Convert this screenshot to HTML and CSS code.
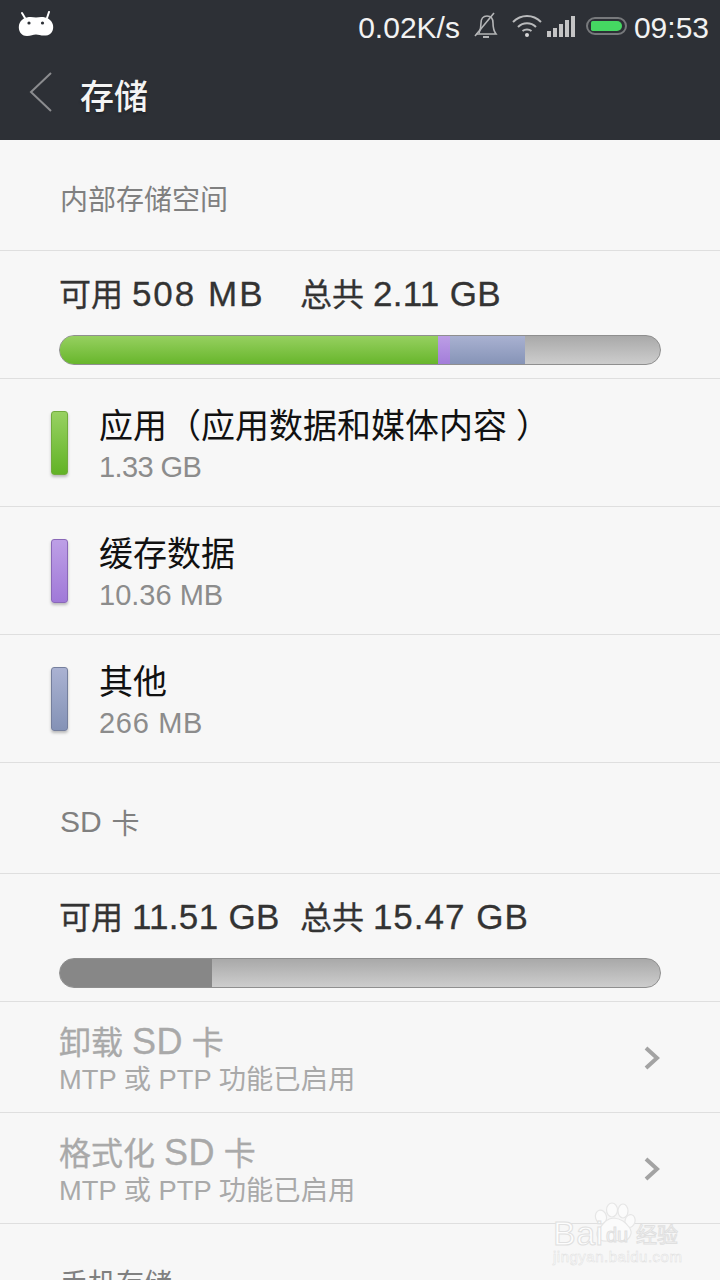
FILE: index.html
```html
<!DOCTYPE html>
<html lang="zh-CN">

<head>
  <meta charset="UTF-8">
  <meta name="viewport" content="width=device-width, initial-scale=1.0">
  <title>存储</title>
  <link rel="stylesheet" href="styles.css">
</head>

<body>
  <div class="screen">
    <div class="status-bar">
      <svg class="logo" width="36" height="26" viewBox="0 0 36 26">
        <path d="M4 2 L7 7 M31 1 L29 7" stroke="#fff" stroke-width="2" stroke-linecap="round" />
        <path d="M18 6.500 C11 5 3 6 1 14 C0 20 3 25 9 25 C13 25 15 23.500 18 23.500 C21 23.500 23 25 28 24.500 C33 24 36 20 35 14 C33 6 25 5 18 6.500 Z" fill="#fff" />
        <circle cx="11" cy="12" r="1.600" fill="#2d3036" />
        <circle cx="24.500" cy="12" r="1.600" fill="#2d3036" />
      </svg>
      <div class="status-right">
        <span class="speed">0.02K/s</span>
        <svg class="bell" width="26" height="28" viewBox="0 0 26 28" fill="none" stroke="#b4b5b7" stroke-width="1.600">
          <path d="M6 21 C8 17 8 15 8 11 C8 7 10 4 14 4 C18 4 20 7 20 11 C20 15 20 18 23 22 L3 22" />
          <path d="M2 24 L21 1" />
          <path d="M10 25 H16" stroke-width="2" />
        </svg>
        <svg class="wifi" width="30" height="24" viewBox="0 0 30 24" fill="none" stroke="#b9babc" stroke-width="2">
          <path d="M1 8 C9 0 21 0 29 8" />
          <path d="M6 13 C11 8 19 8 24 13" />
          <path d="M10.500 17 C13 15 17 15 19.500 17" />
          <circle cx="15" cy="21" r="2" fill="#d6d6d7" stroke="none" />
        </svg>
        <div class="signal">
          <i class="sig1"></i><i class="sig2"></i><i class="sig3"></i><i class="sig4"></i><i class="sig5"></i>
        </div>
        <div class="battery"><div class="battery-fill"></div></div>
        <span class="clock">09:53</span>
      </div>
    </div>

    <div class="title-bar">
      <svg class="back" width="24" height="40" viewBox="0 0 24 40" fill="none" stroke="#8b8c8f" stroke-width="2">
        <path d="M22 1 L2 20 L22 39" />
      </svg>
      <h1 class="title">存储</h1>
    </div>

    <div class="section-head">内部存储空间</div>

    <div class="summary">
      <div class="summary-text">
        <span class="avail">可用 <span class="num num-widest">508 MB</span></span>
        <span>总共 <span class="num">2.11 GB</span></span>
      </div>
      <div class="bar">
        <div class="seg seg-green"></div>
        <div class="seg seg-purple"></div>
        <div class="seg seg-blue"></div>
      </div>
    </div>

    <div class="usage-row">
      <div class="chip chip-green"></div>
      <div>
        <div class="usage-name">应用（应用数据和媒体内容<span class="paren-close">）</span></div>
        <div class="usage-size size-tight">1.33 GB</div>
      </div>
    </div>
    <div class="usage-row">
      <div class="chip chip-purple"></div>
      <div>
        <div class="usage-name">缓存数据</div>
        <div class="usage-size">10.36 MB</div>
      </div>
    </div>
    <div class="usage-row">
      <div class="chip chip-blue"></div>
      <div>
        <div class="usage-name">其他</div>
        <div class="usage-size size-wide">266 MB</div>
      </div>
    </div>

    <div class="section-head section-sd"><span class="sd-latin">SD</span> 卡</div>

    <div class="summary">
      <div class="summary-text">
        <span class="avail">可用 <span class="num">11.51 GB</span></span>
        <span>总共 <span class="num num-wide">15.47 GB</span></span>
      </div>
      <div class="bar">
        <div class="seg seg-used"></div>
      </div>
    </div>

    <div class="action-row">
      <div>
        <div class="action-name">卸载 <span class="num-sd">SD</span> 卡</div>
        <div class="action-sub">MTP 或 PTP 功能已启用</div>
      </div>
      <svg class="chevron" width="16" height="24" viewBox="0 0 16 24" fill="none" stroke="#a3a3a3" stroke-width="4">
        <path d="M2 2 L13 12 L2 22" />
      </svg>
    </div>
    <div class="action-row">
      <div>
        <div class="action-name">格式化 <span class="num-sd">SD</span> 卡</div>
        <div class="action-sub">MTP 或 PTP 功能已启用</div>
      </div>
      <svg class="chevron" width="16" height="24" viewBox="0 0 16 24" fill="none" stroke="#a3a3a3" stroke-width="4">
        <path d="M2 2 L13 12 L2 22" />
      </svg>
    </div>

    <div class="section-head">手机存储</div>

    <div class="watermark">
      <svg class="paw" width="50" height="50" viewBox="0 0 50 50" fill="#fbfbfb" stroke="#e6e6e6" stroke-width="1.200">
        <ellipse cx="11" cy="15" rx="5.500" ry="7" transform="rotate(-15 11 15)" />
        <ellipse cx="22" cy="8" rx="5.500" ry="7" />
        <ellipse cx="33" cy="9" rx="5" ry="7" />
        <ellipse cx="40" cy="19" rx="5" ry="6.500" transform="rotate(15 40 19)" />
        <path d="M24 16 C32 17 35 20 39 25 C44 31 39 40 31 39 C26 38 22 38 17 39 C9 40 4 33 9 27 C13 22 16 16 24 16 Z" />
      </svg>
      <span class="wm-bai">Bai</span>
      <span class="wm-du">du</span>
      <span class="wm-cn">经验</span>
      <span class="wm-url">jingyan.baidu.com</span>
    </div>
  </div>
</body>

</html>
```

FILE: styles.css
```css
* {
  box-sizing: border-box;
}

html,
body {
  margin: 0;
  padding: 0;
}

body {
  font-family: "Liberation Sans", "Noto Sans CJK SC", sans-serif;
  background: #f7f7f7;
  text-spacing-trim: space-all;
}

.screen {
  position: relative;
  width: 720px;
  height: 1280px;
  overflow: hidden;
  background: #f7f7f7;
}

/* status bar */
.status-bar {
  display: flex;
  align-items: center;
  justify-content: space-between;
  height: 48px;
  padding: 0 11px 0 18px;
  background: #2d3036;
  color: #f2f2f2;
}

.status-right {
  display: flex;
  align-items: center;
  font-size: 30px;
  margin-top: 4px;
}

.speed,
.clock {
  padding-top: 4px;
}

.speed {
  margin-right: 13px;
}

.bell {
  margin-right: 13px;
}

.wifi {
  margin-right: 5px;
}

.signal {
  display: flex;
  align-items: flex-end;
  gap: 2px;
  height: 22px;
  margin-right: 11px;
}

.signal i {
  display: block;
  width: 4px;
  background: #c4c4c5;
}

.sig1 { height: 6px; }
.sig2 { height: 9px; }
.sig3 { height: 13px; }
.sig4 { height: 17px; }
.sig5 { height: 21px; }

.battery {
  width: 41px;
  height: 18px;
  padding: 2px 3px;
  border: 2px solid #77797c;
  border-radius: 9px;
  margin-right: 7px;
}

.battery-fill {
  width: 100%;
  height: 100%;
  background: #45d862;
  border-radius: 2px 6px 6px 2px;
}

/* title bar */
.title-bar {
  display: flex;
  align-items: center;
  height: 92px;
  padding-left: 29px;
  background: #2d3036;
}

.back {
  margin-top: -4px;
}

.title {
  margin: 0 0 0 27px;
  font-size: 34px;
  font-weight: 500;
  color: #f4f4f4;
  text-shadow: 0 2px 3px rgba(0, 0, 0, .3);
}

/* sections */
.section-head {
  display: flex;
  align-items: center;
  height: 111px;
  padding: 6px 0 0 60px;
  font-size: 28px;
  color: #808080;
  border-bottom: 1px solid #dfdfdf;
}

.section-sd {
  padding-top: 8px;
  white-space: pre;
}

.sd-latin {
  font-size: 30px;
  margin-right: 2px;
}

.summary {
  height: 128px;
  padding: 22px 59px 0;
  border-bottom: 1px solid #dfdfdf;
}

.summary-text {
  display: flex;
  height: 42px;
  font-size: 32px;
  line-height: 42px;
  color: #333;
  -webkit-text-stroke: .3px #333;
}

.num {
  font-size: 35px;
  letter-spacing: .3px;
}

.num-wide {
  letter-spacing: 1px;
}

.num-widest {
  letter-spacing: 2px;
}

.avail {
  width: 241px;
}

.bar {
  display: flex;
  height: 30px;
  margin-top: 20px;
  overflow: hidden;
  border: 1px solid #8f8f8f;
  border-radius: 15px;
  background: linear-gradient(#a9a9a9, #cdcdcd);
}

.seg {
  margin: -1px 0;
}

.seg-green {
  width: 378px;
  background: linear-gradient(#98d162, #66b52a);
}

.seg-purple {
  width: 12px;
  background: linear-gradient(#bd9fe6, #a27cd9);
}

.seg-blue {
  width: 75px;
  background: linear-gradient(#aab2d2, #8593b6);
}

.seg-used {
  width: 152px;
  background: #878787;
}

/* usage rows */
.usage-row {
  display: flex;
  height: 128px;
  padding: 26px 0 0 51px;
  border-bottom: 1px solid #dfdfdf;
}

.chip {
  width: 17px;
  height: 64px;
  margin: 6px 31px 0 0;
  border-radius: 3px;
  box-shadow: 0 2px 3px rgba(0, 0, 0, .25);
}

.chip-green {
  background: linear-gradient(#98d162, #62b326);
  border: 1px solid #72ab3e;
}

.chip-purple {
  background: linear-gradient(#bd9fe6, #a079d8);
  border: 1px solid #8a68b8;
}

.chip-blue {
  background: linear-gradient(#aab2d2, #8492b6);
  border: 1px solid #757f9d;
}

.usage-name {
  font-size: 34px;
  line-height: 42px;
  color: #111;
}

.paren-close {
  margin-left: 9px;
}

.usage-size {
  margin-top: 2px;
  font-size: 29px;
  line-height: 36px;
  color: #8c8c8c;
}

.size-tight {
  letter-spacing: -.6px;
}

.size-wide {
  letter-spacing: .7px;
}

/* sd card actions */
.action-row {
  display: flex;
  align-items: center;
  justify-content: space-between;
  height: 111px;
  padding: 5px 60px 0 59px;
  border-bottom: 1px solid #dfdfdf;
}

.action-name {
  height: 40px;
  font-size: 32px;
  line-height: 40px;
  color: #a9a9a9;
  -webkit-text-stroke: .3px #a9a9a9;
}

.num-sd {
  font-size: 36px;
  letter-spacing: .5px;
}

.action-sub {
  font-size: 27.300px;
  line-height: 36px;
  color: #a9a9a9;
}

.chevron {
  margin-top: -4px;
}

/* watermark */
.watermark {
  position: absolute;
  left: 552px;
  top: 1202px;
  width: 130px;
  height: 66px;
  color: #fdfdfd;
  -webkit-text-stroke: 1px #e0e0e0;
}

.watermark span {
  position: absolute;
  white-space: nowrap;
}

.paw {
  position: absolute;
  left: 38px;
  top: 0;
}

.wm-bai {
  left: 1px;
  top: 17px;
  font-size: 34px;
  line-height: 28px;
  letter-spacing: .5px;
}

.wm-du {
  left: 54px;
  top: 23px;
  font-size: 20px;
  line-height: 20px;
  color: #f7f7f7;
}

.wm-cn {
  left: 84px;
  top: 21px;
  font-size: 21px;
  line-height: 24px;
}

.wm-url {
  left: 1px;
  top: 47px;
  font-size: 15px;
  line-height: 16px;
  letter-spacing: .5px;
  -webkit-text-stroke: .5px #e0e0e0;
}
```
